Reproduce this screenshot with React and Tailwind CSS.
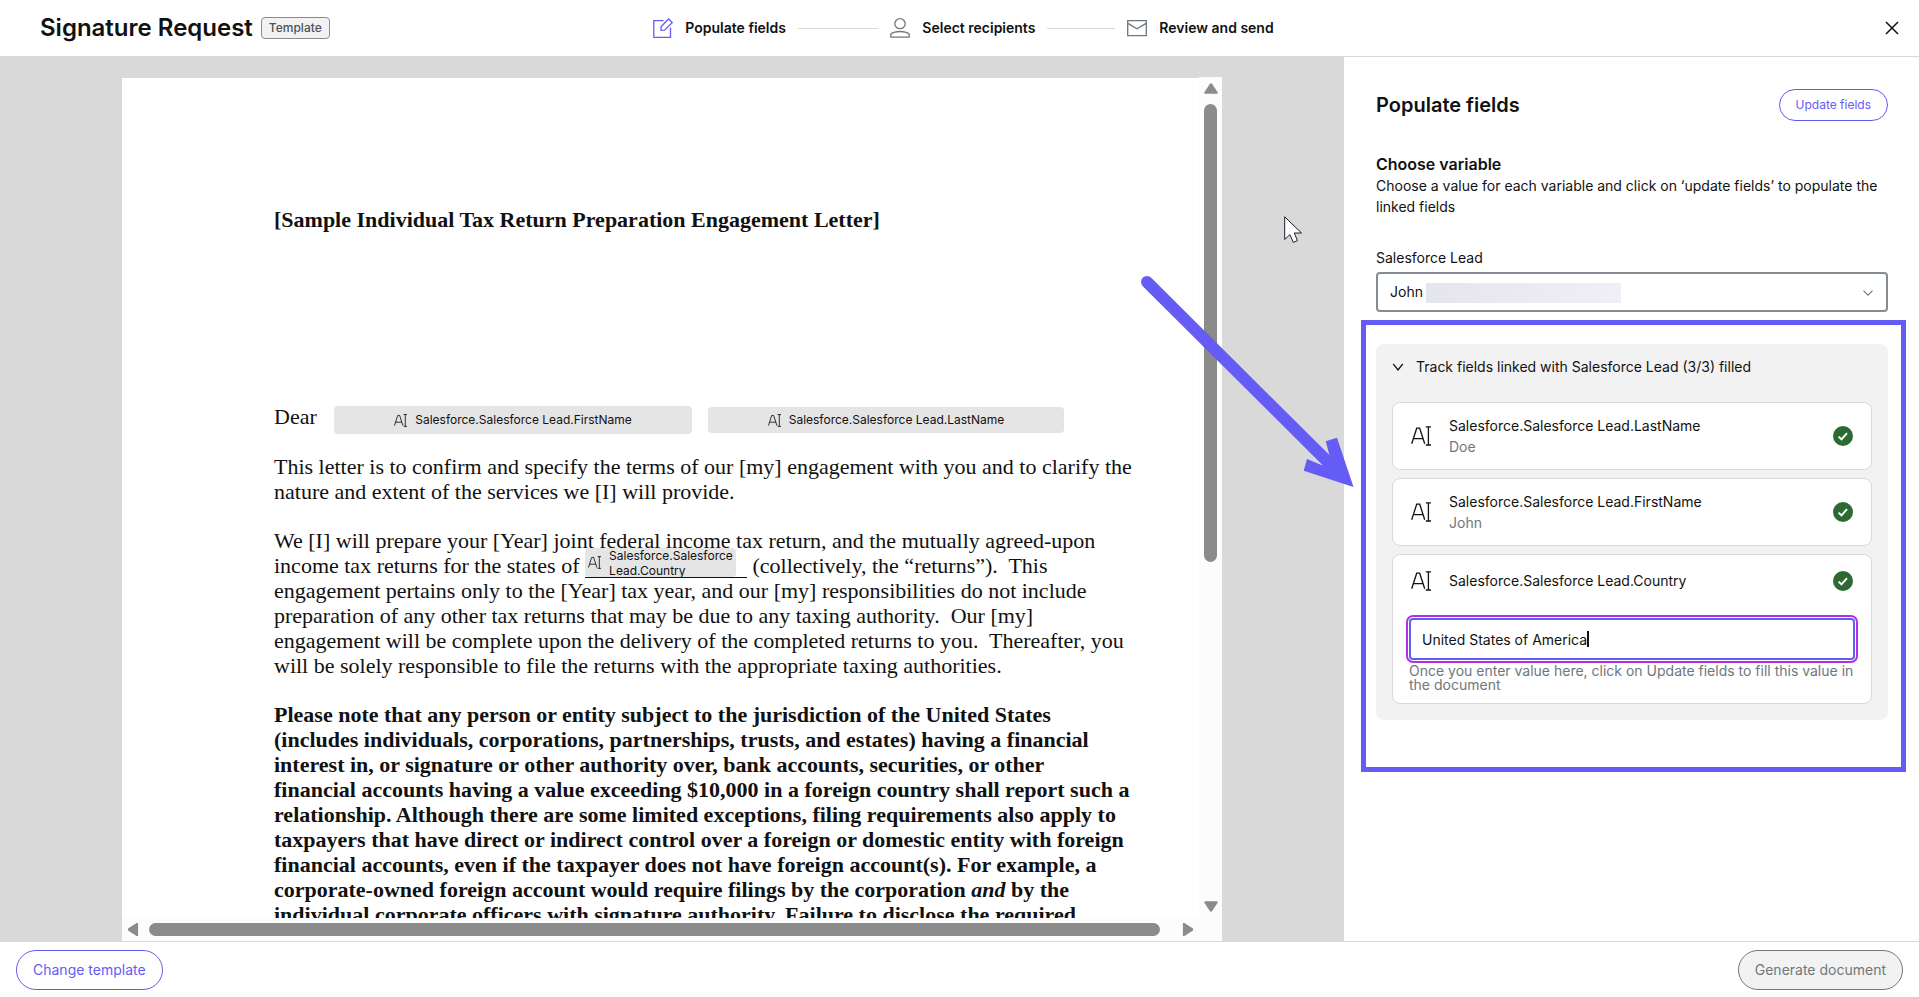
import { useState } from "react";

const LINKED_FIELDS = [
  { name: "Salesforce.Salesforce Lead.LastName", value: "Doe" },
  { name: "Salesforce.Salesforce Lead.FirstName", value: "John" },
];

function TextFieldIcon({ className }) {
  return (
    <svg viewBox="0 0 20 20" className={className} fill="none" stroke="currentColor" strokeWidth="1.3" aria-hidden="true">
      <path d="M.7 17.800 5.700 2.200h3l5 15.600M2.400 12.600H12" />
      <path d="M14.800.9h5.200M14.800 19h5.200M17.400.9V19" />
    </svg>
  );
}

function CheckBadge() {
  return (
    <svg viewBox="0 0 20 20" className="h-5 w-5 shrink-0" role="img" aria-label="Filled">
      <circle cx="10" cy="10" r="10" fill="#2d6a33" />
      <path d="m5.600 10.600 2.900 2.800 5.500-6.300" fill="none" stroke="#fff" strokeWidth="2" />
    </svg>
  );
}

function EditIcon() {
  return (
    <svg viewBox="0 0 20 20" className="h-5 w-5" fill="none" stroke="#655bf5" strokeWidth="1.3" aria-hidden="true">
      <path d="M10.600 2.600H.8v16.700h16.700V9.800" />
      <path d="m8 8.800 7.600-7.800 3.600 3.600-7.700 7.600L8 12.400z" />
    </svg>
  );
}

function PersonIcon() {
  return (
    <svg viewBox="0 0 20 20" className="h-5 w-5" fill="none" stroke="#6f777c" strokeWidth="1.3" aria-hidden="true">
      <ellipse cx="10" cy="5.700" rx="5.200" ry="5" />
      <path d="M.8 19.200v-3.200c2.200-1.700 5.400-2.500 9.200-2.500s7 .8 9.200 2.500v3.200z" />
    </svg>
  );
}

function MailIcon() {
  return (
    <svg viewBox="0 0 20 20" className="h-5 w-5" fill="none" stroke="#6f777c" strokeWidth="1.3" aria-hidden="true">
      <path d="M.7 2.600h18.600v15H.7z" />
      <path d="m.9 5.400 9.100 5.400 9.100-5.400" />
    </svg>
  );
}

function Step({ icon, label, last }) {
  return (
    <li className={last ? "flex items-center" : "flex w-[237px] items-center"}>
      {icon}
      <span className="ml-3 text-sm font-semibold whitespace-nowrap">{label}</span>
      {!last && <span className="mx-3 h-px flex-1 bg-[#d9d9d9]" />}
    </li>
  );
}

function FieldChip({ className, children }) {
  return (
    <span className={`flex items-center justify-center gap-2 rounded bg-[#e5e5e5] font-['Inter',sans-serif] text-xs text-[#111] ${className}`}>
      <TextFieldIcon className="h-[13px] w-[13px] shrink-0" />
      {children}
    </span>
  );
}

function Triangle({ className }) {
  return (
    <svg viewBox="0 0 14 11" className={className} fill="#8b8b8b" aria-hidden="true">
      <path d="M5.800.9a1.400 1.400 0 0 1 2.400 0l5.300 8.200a1 1 0 0 1-.9 1.600H1.400a1 1 0 0 1-.9-1.600z" />
    </svg>
  );
}

function Letter() {
  return (
    <article className="h-full overflow-hidden border-t border-[#d9d9d9] bg-white pl-[152px] font-['Liberation_Serif',serif] text-[22px] leading-[25px] whitespace-pre text-[#111]">
      <h2 className="mt-[129px] font-bold">[Sample Individual Tax Return Preparation Engagement Letter]</h2>
      <div className="mt-[172px] flex h-[30px]">
        <span className="w-[60px]">Dear</span>
        <FieldChip className="h-7 w-[358px] self-end">Salesforce.Salesforce Lead.FirstName</FieldChip>
        <FieldChip className="mt-[3px] ml-4 h-[26px] w-[356px]">Salesforce.Salesforce Lead.LastName</FieldChip>
      </div>
      <p className="mt-5">
        This letter is to confirm and specify the terms of our [my] engagement with you and to clarify the<br />
        nature and extent of the services we [I] will provide.
      </p>
      <p className="mt-6">
        We [I] will prepare your [Year] joint federal income tax return, and the mutually agreed-upon<br />
        income tax returns for the states of{" "}
        <span className="relative inline-block h-[25px] w-[162px] border-b border-[#111] align-bottom">
          <FieldChip className="absolute bottom-0 left-0 h-[29px] w-[151px] leading-[15px]">
            <span>Salesforce.Salesforce<br />Lead.Country</span>
          </FieldChip>
        </span>
        {" "}(collectively, the “returns”).{"  "}This<br />
        engagement pertains only to the [Year] tax year, and our [my] responsibilities do not include<br />
        preparation of any other tax returns that may be due to any taxing authority.{"  "}Our [my]<br />
        engagement will be complete upon the delivery of the completed returns to you.{"  "}Thereafter, you<br />
        will be solely responsible to file the returns with the appropriate taxing authorities.
      </p>
      <p className="mt-6 font-bold">
        Please note that any person or entity subject to the jurisdiction of the United States<br />
        (includes individuals, corporations, partnerships, trusts, and estates) having a financial<br />
        interest in, or signature or other authority over, bank accounts, securities, or other<br />
        financial accounts having a value exceeding $10,000 in a foreign country shall report such a<br />
        relationship. Although there are some limited exceptions, filing requirements also apply to<br />
        taxpayers that have direct or indirect control over a foreign or domestic entity with foreign<br />
        financial accounts, even if the taxpayer does not have foreign account(s). For example, a<br />
        corporate-owned foreign account would require filings by the corporation <em>and</em> by the<br />
        individual corporate officers with signature authority. Failure to disclose the required
      </p>
    </article>
  );
}

function DocumentViewer() {
  return (
    <div className="flex h-full flex-col bg-[#fcfcfc]">
      <div className="flex min-h-0 flex-1">
        <div className="min-w-0 flex-1">
          <Letter />
        </div>
        <div className="flex w-[23px] flex-col items-center py-1.5">
          <Triangle className="h-[11px] w-[14px]" />
          <div className="mt-2.5 w-[13px] flex-1">
            <div className="h-23/40 rounded-full bg-[#8b8b8b]" />
          </div>
          <Triangle className="h-[11px] w-[14px] rotate-180" />
        </div>
      </div>
      <div className="mr-[23px] flex h-[23px] items-center px-1">
        <Triangle className="h-[11px] w-[14px] -rotate-90" />
        <div className="mx-[9px] h-[13px] flex-1 pr-3">
          <div className="h-full rounded-full bg-[#8b8b8b]" />
        </div>
        <Triangle className="h-[11px] w-[14px] rotate-90" />
      </div>
    </div>
  );
}

function LinkedField({ name, value, children }) {
  return (
    <li className="rounded-lg border border-[#d9d9d9] bg-white px-4">
      <div className={children ? "flex h-[51px] items-center" : "flex h-[66px] items-center"}>
        <TextFieldIcon className="ml-0.5 h-5 w-5 shrink-0" />
        <div className="ml-[18px] flex-1 leading-[21px]">
          <p>{name}</p>
          {value && <p className="text-[#6f777c]">{value}</p>}
        </div>
        <div className="mr-0.5">
          <CheckBadge />
        </div>
      </div>
      {children}
    </li>
  );
}

export default function App() {
  const [lead, setLead] = useState("John");
  const [country, setCountry] = useState("United States of America");
  const [open, setOpen] = useState(true);

  return (
    <div className="flex h-screen flex-col overflow-hidden bg-white font-['Inter',sans-serif] text-sm text-[#111]">
      <header className="grid h-[57px] shrink-0 grid-cols-[1fr_auto_1fr] items-center border-b border-[#d9d9d9] pr-8 pl-10">
        <div className="flex items-center gap-2">
          <h1 className="text-2xl font-semibold">Signature Request</h1>
          <span className="rounded border border-[#858b90] bg-[#f2f2f2] px-[7px] text-xs leading-5 font-medium text-[#4b5358]">Template</span>
        </div>
        <ol className="flex">
          <Step icon={<EditIcon />} label="Populate fields" />
          <Step icon={<PersonIcon />} label="Select recipients" />
          <Step icon={<MailIcon />} label="Review and send" last />
        </ol>
        <button type="button" aria-label="Close" className="-mr-3 justify-self-end">
          <svg viewBox="0 0 14 14" className="h-3.5 w-3.5" stroke="#111" strokeWidth="1.5" aria-hidden="true">
            <path d="m1 1 12 12M13 1 1 13" />
          </svg>
        </button>
      </header>

      <div className="flex min-h-0 flex-1">
        <main className="min-w-0 flex-1 bg-[#d9d9d9] px-[122px] pt-5">
          <DocumentViewer />
        </main>

        <aside className="relative w-[575px] shrink-0 pt-8 pr-[31px] pl-8">
          <div className="flex items-center justify-between">
            <h2 className="text-xl font-semibold">Populate fields</h2>
            <button type="button" className="h-8 rounded-full border border-[#655bf5] px-4 text-xs text-[#655bf5]">Update fields</button>
          </div>

          <h3 className="mt-8 text-base leading-[22px] font-semibold">Choose variable</h3>
          <p className="leading-[21px]">
            Choose a value for each variable and click on ‘update fields’ to populate the linked fields
          </p>

          <label htmlFor="lead" className="mt-[30px] block leading-[21px]">Salesforce Lead</label>
          <div className="relative mt-1">
            <select
              id="lead"
              value={lead}
              onChange={(e) => setLead(e.target.value)}
              className="h-10 w-full appearance-none rounded border-2 border-[#868d92] bg-white px-3"
            >
              <option>John</option>
            </select>
            <span className="pointer-events-none absolute top-[11px] left-[50px] h-5 w-[195px] bg-linear-to-r from-[#e5e5ec] to-[#f0eff5]" />
            <svg viewBox="0 0 10 6" className="pointer-events-none absolute top-[18px] right-[15px] h-1.5 w-2.5" fill="none" stroke="#6f777c" strokeWidth="1.2" aria-hidden="true">
              <path d="m.5.6 4.500 4.500L9.500.6" />
            </svg>
          </div>

          <section className="relative mt-8 rounded-lg bg-[#f2f2f2] px-4 pb-4">
            <button type="button" aria-expanded={open} onClick={() => setOpen(!open)} className="flex h-[46px] w-full items-center gap-3 text-left">
              <svg viewBox="0 0 12 8" className="h-2 w-3" fill="none" stroke="#111" strokeWidth="1.3" aria-hidden="true">
                <path d="M1.200.8 6 7 10.800.8" />
              </svg>
              Track fields linked with Salesforce Lead (3/3) filled
            </button>
            {open && (
              <ul className="mt-3 flex flex-col gap-2">
                {LINKED_FIELDS.map((field) => (
                  <LinkedField key={field.name} {...field} />
                ))}
                <LinkedField name="Salesforce.Salesforce Lead.Country">
                  <div className="relative mt-3">
                    <input
                      type="text"
                      aria-label="Salesforce Lead Country"
                      aria-describedby="country-hint"
                      value={country}
                      onChange={(e) => setCountry(e.target.value)}
                      className="block h-[42px] w-full rounded border-2 border-[#655bf5] px-[11px] outline-2 outline-offset-1 outline-[#b32fe6]"
                    />
                    <span className="pointer-events-none absolute top-[13px] left-0 flex h-4 pl-[13px]" aria-hidden="true">
                      <span className="invisible">{country}</span>
                      <span className="w-0.5 bg-[#111]" />
                    </span>
                  </div>
                  <p id="country-hint" className="mt-1 pb-[11px] leading-[14px] text-[#6f777c]">
                    Once you enter value here, click on Update fields to fill this value in the document
                  </p>
                </LinkedField>
              </ul>
            )}
            <div className="pointer-events-none absolute -top-6 -right-[18px] -bottom-[52px] -left-[15px] border-[5px] border-[#655bf5]" />
          </section>

          <svg viewBox="0 0 220 220" className="pointer-events-none absolute top-[213px] -left-[204px] h-[220px] w-[220px]" aria-hidden="true">
            <path d="M7 12 198 202" stroke="#655bf5" strokeWidth="12" strokeLinecap="round" />
            <path d="m213.500 217-16.500-49.300-11.300 3.600 4.300 16-8 8-15-6.300-3.300 11.700z" fill="#655bf5" />
          </svg>
          <svg viewBox="0 0 20 28" className="pointer-events-none absolute top-[159px] -left-[60px] h-7 w-5" fill="#fff" stroke="#1a1a2e" strokeWidth="1" strokeLinejoin="round" aria-hidden="true">
            <path d="M.7.8v22.700l5.200-4.900 3.400 7.800 4.200-1.700-3.300-7.700h7.300z" />
          </svg>
        </aside>
      </div>

      <footer className="flex h-14 shrink-0 items-center justify-between border-t border-[#d9d9d9] px-4">
        <button type="button" className="h-10 rounded-full border border-[#655bf5] px-4 text-[#655bf5]">Change template</button>
        <button type="button" disabled className="h-10 rounded-full border border-[#6f777c] bg-[#f2f2f2] px-4 text-[#6f777c]">Generate document</button>
      </footer>
    </div>
  );
}
